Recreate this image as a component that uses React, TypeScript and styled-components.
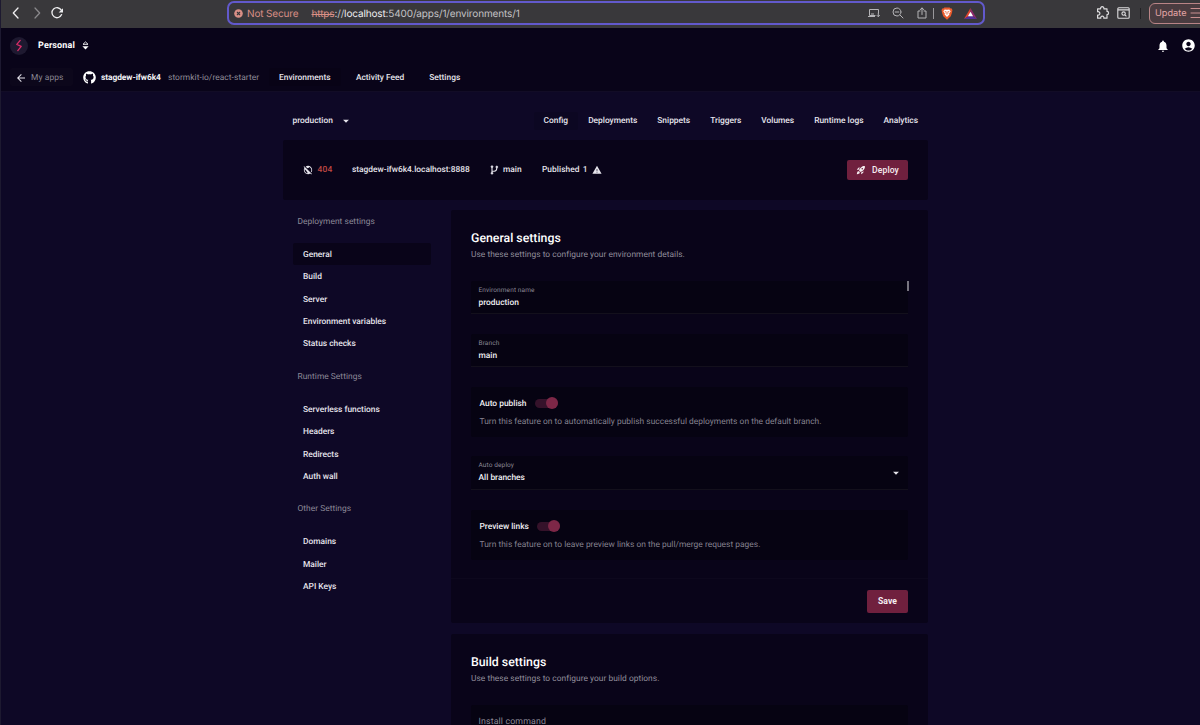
import React from "react";
import styled, { createGlobalStyle } from "styled-components";
import {
  MdArrowBack,
  MdNotifications,
  MdAccountCircle,
  MdWarning,
  MdRocketLaunch,
  MdArrowDropDown,
  MdPublicOff,
} from "react-icons/md";
import { FaGithub } from "react-icons/fa";

const Global = createGlobalStyle`
  * { box-sizing: border-box; }
  html, body { margin: 0; background: #0e0826; }
  body {
    font-family: Roboto, "Liberation Sans", sans-serif;
    font-size: 8.4px;
    color: #e6e4ec;
    overflow: hidden;
    text-rendering: geometricPrecision;
  }
  svg { flex: none; }
`;

const Page = styled.div`
  width: 1200px;
  height: 725px;
  overflow: hidden;
  display: flex;
  flex-direction: column;
  border-left: 1px solid #1d1930;
`;

/* Browser chrome */
const Chrome = styled.div`
  height: 28px;
  flex: none;
  display: flex;
  align-items: center;
  background: #39383b;
  padding: 0 0 2px 9px;
  font-family: Inter, "Liberation Sans", sans-serif;
  font-size: 10px;
  color: #dcdbdd;
`;
const NavIcons = styled.div`
  display: flex;
  align-items: center;
  gap: 6.5px;
  width: 217px;
  flex: none;
`;
const AddressBar = styled.div`
  width: 758px;
  height: 24px;
  flex: none;
  display: flex;
  align-items: center;
  border: 2px solid #6259cc;
  border-radius: 7px;
  padding: 0 5px 0 5px;
`;
const NotSecure = styled.span`
  color: #d98f86;
  font-size: 10px;
  letter-spacing: -0.15px;
  margin-left: 4px;
  padding-top: 1px;
  width: 64.5px;
`;
const Url = styled.span`
  flex: 1;
  padding-top: 1px;
  letter-spacing: -0.14px;
  color: #c3c2c5;
  b { font-weight: 400; color: #efeef0; }
  s { color: #d98f86; }
`;
const AddressIcons = styled.div`
  display: flex;
  align-items: center;
`;
const Gap = styled.span<{ $w: number }>`
  width: ${(p) => p.$w}px;
  flex: none;
`;
const ChromeRule = styled.span<{ $dark?: boolean }>`
  width: 1px;
  height: 11px;
  flex: none;
  background: ${(p) => (p.$dark ? "#222124" : "#99989b")};
`;
const UpdateButton = styled.div`
  width: 60px;
  height: 21px;
  flex: none;
  display: flex;
  align-items: center;
  gap: 3px;
  border: 1px solid #b98486;
  border-radius: 6px;
  background: #4a3c40;
  color: #e3a5a5;
  padding-left: 5px;
  font-size: 9.2px;
`;

/* Application header */
const Header = styled.header`
  height: 64px;
  flex: none;
  background: #090419;
  border-bottom: 1px solid #120c26;
  padding: 7px 5px 0 9px;
`;
const HeaderTop = styled.div`
  height: 21px;
  display: flex;
  align-items: center;
`;
const Logo = styled.div`
  width: 18px;
  height: 18px;
  border-radius: 50%;
  background: #1e1930;
  display: flex;
  align-items: center;
  justify-content: center;
`;
const TeamName = styled.span`
  font-size: 9px;
  font-weight: 700;
  color: #fff;
  letter-spacing: 0.15px;
  margin: 0 7px 0 10px;
`;
const HeaderActions = styled.div`
  margin-left: auto;
  display: flex;
  align-items: center;
  gap: 11px;
  color: #fff;
`;
const HeaderNav = styled.nav`
  height: 18px;
  margin-top: 12px;
  display: flex;
  align-items: center;
  > a, > span { padding-top: 1px; }
`;
const BackButton = styled.a`
  width: 63px;
  height: 18px;
  display: flex;
  align-items: center;
  gap: 4px;
  padding-left: 5px;
  margin-right: 10px;
  border-radius: 2px;
  background: #0c071b;
  color: #8b8894;
  svg { color: #e6e4ec; }
  span { letter-spacing: 0.12px; }
`;
const AppName = styled.span`
  font-weight: 700;
  color: #f1f0f4;
  margin-left: 5px;
  width: 67px;
  flex: none;
  letter-spacing: -0.05px;
`;
const Repo = styled.span`
  width: 101px;
  flex: none;
  color: #8f8c98;
  letter-spacing: 0.07px;
`;
const Tab = styled.a<{ $active?: boolean }>`
  height: 18px;
  display: flex;
  align-items: center;
  padding: 0 10px;
  font-weight: 500;
  border-radius: 2px;
  white-space: nowrap;
  background: ${(p) => (p.$active ? "rgba(0,0,0,.1)" : "transparent")};
`;

/* Page body */
const Main = styled.main`
  width: 645px;
  margin-left: 282px;
  padding-top: 18px;
`;
const EnvBar = styled.div`
  height: 22px;
  display: flex;
  align-items: center;
  justify-content: space-between;
  padding-left: 9.5px;
`;
const EnvSelect = styled.div`
  display: flex;
  align-items: center;
  gap: 6px;
  font-weight: 500;
`;
const Tabs = styled.nav`
  display: flex;
`;
const Summary = styled.section`
  height: 60px;
  margin-top: 8px;
  padding: 0 20px 1px;
  display: flex;
  align-items: center;
  background: #090419;
  border-radius: 2px;
  font-weight: 500;
`;
const Status = styled.span`
  color: #c14a43;
  margin-left: 4.5px;
  width: 34.5px;
  letter-spacing: 0.2px;
`;
const Domain = styled.span`
  width: 137.5px;
`;
const Branch = styled.span`
  width: 39px;
  margin-left: 4.5px;
`;
const Published = styled.span`
  margin-right: 4px;
  letter-spacing: 0.03px;
  word-spacing: 1.2px;
`;
const Button = styled.button<{ $w: number; $h: number; $bold?: boolean }>`
  width: ${(p) => p.$w}px;
  height: ${(p) => p.$h}px;
  margin-left: auto;
  padding: 0;
  display: flex;
  align-items: center;
  justify-content: center;
  gap: 6px;
  border: 0;
  border-radius: 2px;
  background: #70203e;
  color: #f6eef2;
  font: ${(p) => (p.$bold ? 700 : 500)} 8.6px Roboto, sans-serif;
  letter-spacing: 0.1px;
`;
const Columns = styled.div`
  display: flex;
  margin-top: 10px;
`;
const Sidebar = styled.aside`
  width: 148px;
  margin-right: 20px;
  padding-left: 10px;
`;
const Group = styled.div`
  margin-bottom: 10.2px;
`;
const GroupTitle = styled.div`
  height: 22px;
  line-height: 24px;
  margin-bottom: 11px;
  padding-left: 4.5px;
  color: #8c8997;
  letter-spacing: 0.04px;
`;
const SideLink = styled.a<{ $active?: boolean }>`
  display: block;
  height: 22.35px;
  line-height: 24.6px;
  padding-left: 10px;
  font-weight: 500;
  border-radius: 2px;
  background: ${(p) => (p.$active ? "#090419" : "transparent")};
`;
const Content = styled.div`
  width: 477px;
`;
const Card = styled.section`
  background: #090419;
  border-radius: 2px;
  margin-bottom: 11px;
`;
const CardBody = styled.div`
  padding: 20px 20px 0 20px;
`;
const CardTitle = styled.h2`
  margin: 0;
  padding-top: 1px;
  font-size: 12.3px;
  font-weight: 500;
  line-height: 17px;
  color: #fff;
`;
const CardText = styled.p`
  margin: 0 0 18px;
  line-height: 15px;
  color: #918e9b;
  letter-spacing: 0.04px;
`;
const Field = styled.div<{ $h?: number }>`
  height: ${(p) => p.$h ?? 33}px;
  margin-bottom: 20px;
  padding: 4px 7px 0 7.5px;
  display: flex;
  justify-content: space-between;
  align-items: flex-start;
  background: #060312;
  border-bottom: 1px solid #13101c;
  border-radius: 2px 2px 0 0;
`;
const Label = styled.div`
  font-size: 6.5px;
  line-height: 11px;
  color: #8c8996;
  letter-spacing: 0.12px;
`;
const Value = styled.div`
  line-height: 15px;
  font-weight: 500;
  color: #f0eff3;
`;
const Placeholder = styled.div`
  font-size: 8.8px;
  line-height: 26px;
  color: #8c8996;
  letter-spacing: 0.13px;
`;
const Caret = styled.div`
  width: 2px;
  height: 10px;
  margin: -4px -8px 0 0;
  background: #77747f;
`;
const Toggle = styled.div`
  height: 50px;
  margin-bottom: 19px;
  padding: 8px 9px 0 8.5px;
  background: #060312;
  border-radius: 2px;
`;
const ToggleRow = styled.div`
  height: 17px;
  display: flex;
  align-items: center;
  gap: 8px;
  font-weight: 500;
  color: #f0eff3;
`;
const ToggleText = styled.div`
  line-height: 20px;
  color: #85828f;
  letter-spacing: 0.03px;
`;
const Track = styled.span`
  width: 23px;
  height: 9px;
  margin-bottom: 1px;
  border-radius: 5px;
  background: #35122a;
  display: flex;
  align-items: center;
  justify-content: flex-end;
`;
const Thumb = styled.span`
  width: 12px;
  height: 12px;
  flex: none;
  border-radius: 50%;
  background: #7d2747;
`;
const CardFooter = styled.div`
  height: 45px;
  margin-top: -1px;
  display: flex;
  align-items: center;
  border-top: 1px solid #0d081d;
  padding: 0 20px;
`;

const Stroke = ({ w, h, box, d, c = "#dddcde", sw = 1.2 }: {
  w: number; h: number; box: string; d: string; c?: string; sw?: number;
}) => (
  <svg width={w} height={h} viewBox={box} fill="none" stroke={c} strokeWidth={sw} strokeLinecap="round" strokeLinejoin="round">
    <path d={d} />
  </svg>
);

const Switch = () => (
  <Track><Thumb /></Track>
);

const BranchIcon = () => (
  <svg width="9" height="10" viewBox="0 0 9 10" fill="none" stroke="#e6e4ec" strokeWidth="1.1">
    <path d="M2 2.5v5M2 6.2h2.2Q6.8 6 6.8 3" />
    <circle cx="2" cy="1.7" r="1" fill="#e6e4ec" strokeWidth=".6" />
    <circle cx="2" cy="8.2" r="1" fill="#e6e4ec" strokeWidth=".6" />
    <circle cx="6.8" cy="2" r="1" fill="#e6e4ec" strokeWidth=".6" />
  </svg>
);

const groups = [
  { title: "Deployment settings", links: ["General", "Build", "Server", "Environment variables", "Status checks"] },
  { title: "Runtime Settings", links: ["Serverless functions", "Headers", "Redirects", "Auth wall"] },
  { title: "Other Settings", links: ["Domains", "Mailer", "API Keys"] },
];
const tabs = ["Config", "Deployments", "Snippets", "Triggers", "Volumes", "Runtime logs", "Analytics"];

const BrowserBar = () => (
  <Chrome>
    <NavIcons>
      <Stroke w={13} h={14} box="0 0 13 14" d="M8 2 3.3 7 8 12" c="#f0eff1" sw={1.3} />
      <Stroke w={13} h={14} box="0 0 13 14" d="M5 2 9.7 7 5 12" c="#8b8a8d" sw={1.2} />
      <svg width="16" height="14" viewBox="0 0 16 14" fill="none" stroke="#ececee" strokeWidth="1.3">
        <path d="M12.3 4.2A5 5 0 1 0 12.6 8.6" strokeLinecap="round" />
        <path d="M14 2.2v4.3H9.7z" fill="#ececee" stroke="none" />
      </svg>
    </NavIcons>
    <AddressBar>
      <svg width="9" height="9" viewBox="0 0 9 9">
        <circle cx="4.5" cy="4.5" r="4.3" fill="#d98f86" />
        <path d="M3 3l3 3M6 3L3 6" stroke="#39383b" strokeWidth="1.1" />
      </svg>
      <NotSecure>Not Secure</NotSecure>
      <Url><s>https</s>://<b>localhost</b>:5400/apps/1/environments/1</Url>
      <AddressIcons>
        <svg width="12" height="10" viewBox="0 0 12 10" fill="none" stroke="#b5b4b7" strokeWidth="1">
          <path d="M7.5 7.5H1.5v-6h9v4" />
          <path d="M0 8.5h7M3 6h3M10.3 4.8v3.8M8.8 7.2l1.5 1.5 1.5-1.5" />
        </svg>
        <Gap $w={12} />
        <Stroke w={12} h={12} box="0 0 12 12" d="M9 5a4 4 0 1 1-8 0a4 4 0 0 1 8 0M8 8l3 3M3.2 5h3.6" c="#b5b4b7" sw={1} />
        <Gap $w={13} />
        <Stroke w={10} h={12} box="0 0 10 12" d="M3 4H1v7h8V4H7M5 7.5V1M3 2.8L5 1l2 1.8" c="#b5b4b7" sw={1} />
        <Gap $w={6} />
        <ChromeRule />
        <Gap $w={7} />
        <svg width="12" height="13" viewBox="0 0 12 13">
          <path d="M3.3.4h5.4l.9 1 1.2.1.7 1.8-.4 1 .1.7-1.4 4.3L6 12.7 2.2 9.3.8 5l.1-.7-.4-1 .7-1.8 1.2-.1z" fill="#ea5b2c" />
          <path d="M6 2.8l2.3-.4 1.4 1.8-1.5 2.3.2 1L6 9.9l-2.4-2.4.2-1-1.5-2.3 1.4-1.8z" fill="#fff" />
          <path d="M3.6 4.3l1.7.5-.4 1.6.9.7h.4l.9-.7-.4-1.6 1.7-.5" fill="none" stroke="#ea5b2c" strokeWidth=".7" />
        </svg>
        <Gap $w={11} />
        <svg width="13" height="11" viewBox="0 0 13 11">
          <path d="M6.5 0L0 11l6.5-4z" fill="#e0452f" />
          <path d="M6.5 0L13 11 6.5 7z" fill="#8f2a6d" />
          <path d="M0 11h13L6.5 7z" fill="#54309a" />
          <path d="M6.5 3.8L3.9 8.3h5.2z" fill="#fff" />
        </svg>
        <Gap $w={1} />
      </AddressIcons>
    </AddressBar>
    <Gap $w={111} />
    <svg width="14" height="14" viewBox="0 0 14 14" fill="none" stroke="#dddcde" strokeWidth="1.2" strokeLinejoin="round">
      <path d="M1.6 2.8H4.6A1.7 1.7 0 1 1 7.9 2.8H11V5.4A1.6 1.6 0 1 1 11 8.6V12.2H7.8A1.6 1.6 0 1 0 4.8 12.2H1.6V9A1.7 1.7 0 1 0 1.6 5.8Z" />
    </svg>
    <Gap $w={7} />
    <svg width="13" height="12" viewBox="0 0 13 12" fill="none" stroke="#dddcde" strokeWidth="1.1">
      <rect x=".8" y=".8" width="11.4" height="10.4" rx="1" />
      <path d="M1 2.9h11M7.9 7.9l1.5 1.5" />
      <circle cx="6.6" cy="6.6" r="1.7" />
    </svg>
    <Gap $w={10} />
    <ChromeRule $dark />
    <Gap $w={8} />
    <UpdateButton>
      Update
      <Stroke w={14} h={12} box="0 0 14 12" d="M1 1.5h14M1 6h14M1 10.5h14" c="#c98f90" sw={1} />
    </UpdateButton>
  </Chrome>
);

export default function App() {
  return (
    <>
      <Global />
      <Page>
        <BrowserBar />
        <Header>
          <HeaderTop>
            <Logo>
              <Stroke w={8} h={13} box="0 0 8 13" d="M5.2 1.4L1.8 5.4 6.2 7.4 2.8 11.6" c="#d92d68" sw={1.3} />
            </Logo>
            <TeamName>Personal</TeamName>
            <svg width="7" height="9" viewBox="0 0 7 9">
              <path d="M1 3.3L3.5.9 6 3.3z" fill="none" stroke="#fff" strokeWidth=".9" />
              <path d="M.4 5.3h6.2L3.5 8.4z" fill="#fff" />
            </svg>
            <HeaderActions>
              <MdNotifications size={14} />
              <MdAccountCircle size={15} style={{ marginRight: -1 }} />
            </HeaderActions>
          </HeaderTop>
          <HeaderNav>
            <BackButton><MdArrowBack size={12} /><span>My apps</span></BackButton>
            <FaGithub size={13} color="#fff" />
            <AppName>stagdew-ifw6k4</AppName>
            <Repo>stormkit-io/react-starter</Repo>
            <Tab $active>Environments</Tab>
            <Gap $w={5.4} />
            <Tab>Activity Feed</Tab>
            <Gap $w={5} />
            <Tab>Settings</Tab>
          </HeaderNav>
        </Header>
        <Main>
          <EnvBar>
            <EnvSelect>production <MdArrowDropDown size={14} /></EnvSelect>
            <Tabs>
              {tabs.map((t, i) => <Tab key={t} $active={i === 0}>{t}</Tab>)}
            </Tabs>
          </EnvBar>
          <Summary>
            <MdPublicOff size={10} />
            <Status>404</Status>
            <Domain>stagdew-ifw6k4.localhost:8888</Domain>
            <BranchIcon />
            <Branch>main</Branch>
            <Published>Published 1</Published>
            <MdWarning size={10} />
            <Button $w={61} $h={20}><MdRocketLaunch size={10} />Deploy</Button>
          </Summary>
          <Columns>
            <Sidebar>
              {groups.map((g) => (
                <Group key={g.title}>
                  <GroupTitle>{g.title}</GroupTitle>
                  {g.links.map((l) => <SideLink key={l} $active={l === "General"}>{l}</SideLink>)}
                </Group>
              ))}
            </Sidebar>
            <Content>
              <Card>
                <CardBody>
                  <CardTitle>General settings</CardTitle>
                  <CardText>Use these settings to configure your environment details.</CardText>
                  <Field>
                    <div><Label>Environment name</Label><Value>production</Value></div>
                    <Caret />
                  </Field>
                  <Field>
                    <div><Label>Branch</Label><Value>main</Value></div>
                  </Field>
                  <Toggle>
                    <ToggleRow>Auto publish <Switch /></ToggleRow>
                    <ToggleText>Turn this feature on to automatically publish successful deployments on the default branch.</ToggleText>
                  </Toggle>
                  <Field $h={34}>
                    <div><Label>Auto deploy</Label><Value>All branches</Value></div>
                    <MdArrowDropDown size={14} style={{ margin: "6px -2px 0 0" }} />
                  </Field>
                  <Toggle>
                    <ToggleRow>Preview links <Switch /></ToggleRow>
                    <ToggleText>Turn this feature on to leave preview links on the pull/merge request pages.</ToggleText>
                  </Toggle>
                </CardBody>
                <CardFooter><Button $w={41} $h={23} $bold>Save</Button></CardFooter>
              </Card>
              <Card>
                <CardBody>
                  <CardTitle>Build settings</CardTitle>
                  <CardText>Use these settings to configure your build options.</CardText>
                  <Field><Placeholder>Install command</Placeholder></Field>
                </CardBody>
              </Card>
            </Content>
          </Columns>
        </Main>
      </Page>
    </>
  );
}
